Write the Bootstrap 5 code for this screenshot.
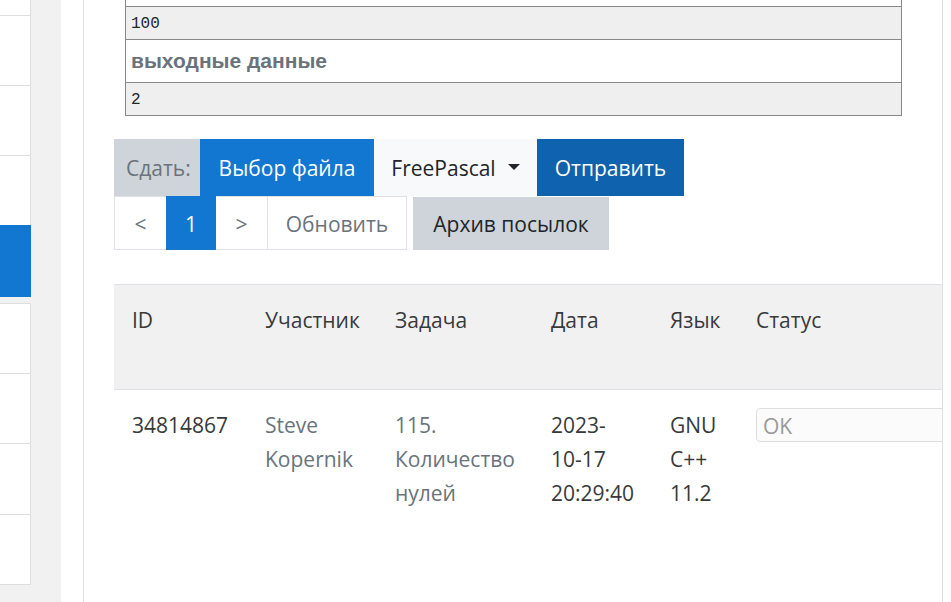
<!DOCTYPE html>
<html lang="ru">
<head>
<meta charset="utf-8">
<meta name="viewport" content="width=device-width, initial-scale=1">
<title>Посылки</title>
<link href="https://cdn.jsdelivr.net/npm/bootstrap@5.3.0/dist/css/bootstrap.min.css" rel="stylesheet">
<style>
body { font-family: "Open Sans", "Noto Sans", sans-serif; font-size: 21px; line-height: 34px; color: #373a3c; }
.side { width: 61px; background: #f1f1f1; padding-right: 30px; }
.side .list-group { border-radius: 0; }
.side .list-group-item { height: 70px; padding: 0; border: 0 solid #dedede; border-width: 0 1px 1px 0; border-radius: 0; background: #fff; }
.side .list-group-item.cut { height: 16px; }
.side .list-group-item.last-plain { height: 69px; border-bottom: 0; }
.side .list-group-item.active { height: 72px; margin: 0; background: #1177d1; border: 0; }
.side .group-next { margin-top: 6px; border-top: 1px solid #dedede; }
.side .group-next .list-group-item:nth-child(3n) { height: 71px; }
.main-pane { padding: 0 8px 0 22px; min-width: 0; }
.task-panel { border: solid #dedede; border-width: 0 1px; padding: 0 30px; overflow: hidden; }
.samples { margin: 0 10px 23px 11px; border: 1px solid #888; border-top: 0; }
.samples > * { margin: 0; border-top: 1px solid #888; }
.samples .sample-rest { height: 6px; border-top: 0; }
.samples pre { background: #efefef; padding: 2px 5px 0; height: 33px; line-height: 31px; font-family: "Liberation Mono", monospace; font-size: 16px; color: #212529; overflow: hidden; }
.samples h6 { padding: 0 5px; font: bold 21px/42px "Liberation Sans", Arial, sans-serif; color: #6a737b; }
.submit-row > * { height: 57px; white-space: nowrap; }
.submit-row .btn, .pager .btn, .pager .page-link { font-size: 21px; line-height: 34px; border-radius: 0; }
.submit-label { background: #ced4da; color: #6a737b; padding: 12px 0 11px 12px; width: 86px; }
.btn-file { width: 174px; background: #1177d1; color: #fff; padding: 0; }
.btn-lang { width: 163px; background: #f8f9fa; color: #212529; padding: 0; }
.btn-lang::after { margin-left: 12px; }
.btn-send { width: 147px; background: #0f63ae; color: #fff; padding: 0; }
.pager { gap: 6px; }
.pager .page-item .page-link { height: 54px; width: 53px; padding: 10px 0 8px; text-align: center; color: #6a737b; border-color: #dee2e6; border-radius: 0; }
.pager .active .page-link { background: #1177d1; border-color: #1177d1; color: #fff; width: 50px; }
.pager .refresh .page-link { width: 140px; }
.pager .active .page-link { color: #fff; }
.btn-archive { background: #ced4da; color: #212529; width: 196px; height: 53px; padding: 0; }
.runs { width: 1000px; margin-top: 34px; table-layout: fixed; color: #373a3c; }
.runs th, .runs td { padding: 18px; border: 0; font-weight: 400; background: transparent; color: inherit; box-shadow: none; }
.runs thead { background: #f1f1f1; border: solid #dee2e6; border-width: 1px 0; }
.runs thead th { padding-bottom: 52px; }
.runs td a { color: #6a737b; text-decoration: none; }
.c-id { width: 133px; } .c-user { width: 130px; } .c-task { width: 156px; } .c-date { width: 119px; } .c-lang { width: 86px; }
.runs .verdict { height: 34px; min-height: 0; padding: 1px 6px 0; font-size: 21px; line-height: 31px; color: #999; background: #fbfbfb; border: 1px solid #dedede; border-radius: 4px; opacity: 1; }
</style>
</head>
<body>
<div class="d-flex min-vh-100">
  <aside class="side flex-shrink-0" aria-label="Навигация">
    <div class="list-group">
      <div class="list-group-item cut"></div>
      <div class="list-group-item"></div>
      <div class="list-group-item"></div>
      <div class="list-group-item last-plain"></div>
      <div class="list-group-item active"></div>
    </div>
    <div class="list-group group-next">
      <div class="list-group-item"></div>
      <div class="list-group-item"></div>
      <div class="list-group-item"></div>
      <div class="list-group-item"></div>
    </div>
  </aside>
  <main class="main-pane flex-grow-1 d-flex">
    <section class="task-panel flex-grow-1 min-vh-100 w-100">
      <div class="samples">
        <div class="sample-rest"></div>
        <pre>100</pre>
        <h6>выходные данные</h6>
        <pre>2</pre>
      </div>
      <form class="submit-row d-flex">
        <span class="submit-label">Сдать:</span>
        <button type="button" class="btn btn-file">Выбор файла</button>
        <button type="button" class="btn btn-lang dropdown-toggle">FreePascal</button>
        <button type="button" class="btn btn-send">Отправить</button>
      </form>
      <div class="pager d-flex align-items-end">
        <ul class="pagination mb-0">
          <li class="page-item"><a class="page-link" href="#">&lt;</a></li>
          <li class="page-item active"><a class="page-link" href="#">1</a></li>
          <li class="page-item"><a class="page-link" href="#">&gt;</a></li>
          <li class="page-item refresh"><a class="page-link" href="#">Обновить</a></li>
        </ul>
        <button type="button" class="btn btn-archive">Архив посылок</button>
      </div>
      <table class="table runs mb-0">
        <colgroup><col class="c-id"><col class="c-user"><col class="c-task"><col class="c-date"><col class="c-lang"><col></colgroup>
        <thead>
          <tr><th>ID</th><th>Участник</th><th>Задача</th><th>Дата</th><th>Язык</th><th>Статус</th></tr>
        </thead>
        <tbody>
          <tr>
            <td>34814867</td>
            <td><a href="#">Steve Kopernik</a></td>
            <td><a href="#">115. Количество нулей</a></td>
            <td>2023-<br>10-17 20:29:40</td>
            <td>GNU C++ 11.2</td>
            <td><input class="form-control verdict" type="text" value="OK" aria-label="Статус" disabled></td>
          </tr>
        </tbody>
      </table>
    </section>
  </main>
</div>
<script src="https://cdn.jsdelivr.net/npm/bootstrap@5.3.0/dist/js/bootstrap.bundle.min.js"></script>
</body>
</html>
